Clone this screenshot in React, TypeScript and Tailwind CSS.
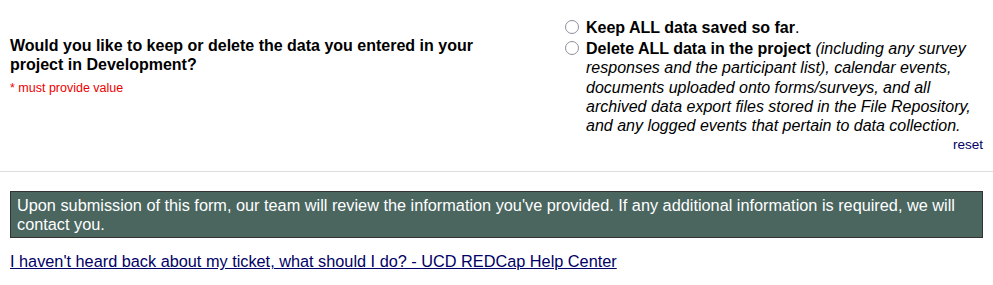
import React, { useState } from 'react';

const Radio: React.FC<{ checked: boolean; onClick: () => void }> = ({ checked, onClick }) => (
  <span
    onClick={onClick}
    className="mt-[2px] flex h-[14px] w-[14px] shrink-0 cursor-pointer items-center justify-center rounded-full border border-[#8f8f9d] bg-white"
  >
    {checked && <span className="h-[8px] w-[8px] rounded-full bg-[#0075ff]" />}
  </span>
);

const App: React.FC = () => {
  const [choice, setChoice] = useState<'keep' | 'delete' | ''>('');

  return (
    <div className="min-h-screen bg-white font-['Liberation_Sans',Arial,sans-serif] text-black">
      <div className="flex border-b border-[#dddddd]">
        <div className="w-[560px] shrink-0 pl-[10px] pt-[37px]">
          <div className="w-[520px] text-[16px] font-bold leading-[18.5px]">
            Would you like to keep or delete the data you entered in your project in Development?
          </div>
          <div className="mt-[7px] text-[12.5px] leading-[15px] text-[#ee0000]">* must provide value</div>
        </div>
        <div className="flex-1 pb-[18px] pr-[10px] pt-[18px]">
          <div className="mb-[2px] flex gap-[7px] pl-[5px] text-[16px] leading-[19.2px]">
            <Radio checked={choice === 'keep'} onClick={() => setChoice('keep')} />
            <div>
              <b>Keep ALL data saved so far</b>.
            </div>
          </div>
          <div className="flex gap-[7px] pl-[5px] text-[16px] leading-[19.2px]">
            <Radio checked={choice === 'delete'} onClick={() => setChoice('delete')} />
            <div>
              <b>Delete ALL data in the project</b>{' '}
              <i>
                (including any survey responses and the participant list), calendar events, documents uploaded onto
                forms/surveys, and all archived data export files stored in the File Repository, and any logged events
                that pertain to data collection.
              </i>
            </div>
          </div>
          <div className="mt-[2px] text-right text-[13.5px] leading-[16px]">
            <a href="#" onClick={() => setChoice('')} className="text-[#000066]">
              reset
            </a>
          </div>
        </div>
      </div>

      <div className="mx-[10px] mt-[19px] border border-[#333333] bg-[#4a665f] px-[6px] py-[4px] text-[16.3px] leading-[18.5px] text-white">
        Upon submission of this form, our team will review the information you've provided. If any additional
        information is required, we will contact you.
      </div>

      <div className="mt-[14px] px-[10px] text-[16.3px] leading-[19px]">
        <a href="#" className="text-[#000066] underline">
          I haven't heard back about my ticket, what should I do? - UCD REDCap Help Center
        </a>
      </div>
    </div>
  );
};

export default App;
